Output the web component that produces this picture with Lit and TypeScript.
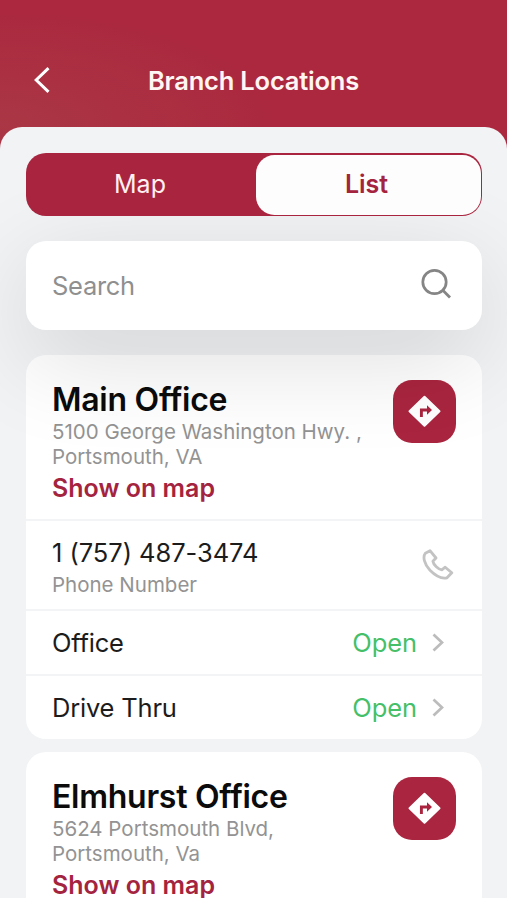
import { LitElement, html, css, svg } from "lit";
import { customElement, property } from "lit/decorators.js";

interface Branch {
  name: string;
  street: string;
  city: string;
  phone: string;
}

const branches: Branch[] = [
  { name: "Main Office", street: "5100 George Washington Hwy. ,", city: "Portsmouth, VA", phone: "1 (757) 487-3474" },
  { name: "Elmhurst Office", street: "5624 Portsmouth Blvd,", city: "Portsmouth, Va", phone: "" },
];

const chevron = svg`<path d="M1.5 1.5 10 9.5 1.5 17.5" fill="none" stroke="#bcbcbc" stroke-width="2.7"/>`;

@customElement("branch-card")
class BranchCard extends LitElement {
  @property({ attribute: false }) branch!: Branch;

  static styles = css`
    :host { display: block; background: #fff; border-radius: 20px; }
    .top { display: flex; justify-content: space-between; height: 164px; padding: 25px 26px 0 26px; box-sizing: border-box; }
    .name { font-size: 32px; font-weight: 600; line-height: 38px; color: #0b0b0b; letter-spacing: -0.27px; white-space: nowrap; }
    .address { font-size: 20.5px; line-height: 25px; color: #939393; white-space: nowrap; }
    .link { font-size: 25px; font-weight: 600; line-height: 30px; margin-top: 4px; color: #a4243f; }
    .text { margin-top: 1px; }
    .go { width: 63px; height: 63px; border-radius: 19px; background: #aa253f; display: grid; place-items: center; flex: none; }
    .row { display: flex; align-items: center; box-sizing: border-box; border-top: 2px solid #f3f4f5; padding: 0 28px 0 26px; height: 65px; font-size: 25.5px; letter-spacing: -0.2px; color: #1c1c1c; }
    .row > :first-child { flex: 1; }
    .phone { height: 90px; letter-spacing: -0.05px; }
    .phone > :first-child { padding-top: 7px; }
    .number { line-height: 32px; }
    .caption { font-size: 20.5px; line-height: 31px; color: #939393; letter-spacing: 0; }
    .open { color: #45c069; margin-right: 15px; letter-spacing: -0.1px; }
    .chevron { margin-right: 10px; }
    svg { display: block; }
  `;

  render() {
    const b = this.branch;
    return html`
      <div class="top">
        <div class="text">
          <div class="name">${b.name}</div>
          <div class="address">${b.street}<br />${b.city}</div>
          <div class="link">Show on map</div>
        </div>
        <div class="go">
          <svg width="34" height="34" viewBox="0 0 34 34">
            <path d="M16.5 1.8 31.5 16.3 16.5 30.8 1.5 16.3Z" fill="#fff" stroke="#fff" stroke-width="2" stroke-linejoin="round"/>
            <path d="M13.4 22V15H20" fill="none" stroke="#aa253f" stroke-width="2.9"/>
            <path d="M19 10.2 24 15 19 19.8Z" fill="#aa253f"/>
          </svg>
        </div>
      </div>
      ${b.phone
        ? html`
            <div class="row phone">
              <div>
                <div class="number">${b.phone}</div>
                <div class="caption">Phone Number</div>
              </div>
              <svg width="32" height="32" viewBox="0 0 32 32">
                <path d="M8 1.7 3.4 4.2C0.6 7.8 2 14.8 8 21.3C14 27.4 20.5 29.8 25 28.8L29.8 23.8 23.2 18.2 19.8 20.8C16.5 20.6 11.4 15.8 10.9 12.2L14 9Z" fill="none" stroke="#c3c3c3" stroke-width="2.8" stroke-linejoin="round"/>
              </svg>
            </div>
            ${["Office", "Drive Thru"].map(
              (label) => html`
                <div class="row">
                  <div>${label}</div>
                  <div class="open">Open</div>
                  <svg class="chevron" width="12" height="19" viewBox="0 0 12 19">${chevron}</svg>
                </div>
              `
            )}
          `
        : ""}
    `;
  }
}

@customElement("app-root")
class AppRoot extends LitElement {
  static styles = css`
    :host {
      display: flex; flex-direction: column; height: 898px; overflow: hidden;
      font-family: Inter, "Liberation Sans", sans-serif;
      background: radial-gradient(ellipse 280px 115px at 0 125px, #aa3745, #ab283e) #ab283e;
    }
    header { display: grid; grid-template-columns: 60px 1fr 60px; align-items: center; height: 127px; padding: 33px 0 0 0; box-sizing: border-box; flex: none; }
    .back { margin-left: 33px; display: block; }
    h1 { margin: 0; font-size: 25.5px; font-weight: 600; letter-spacing: -0.2px; color: #fff6f4; text-align: center; }
    main { flex: 1; min-height: 0; background: #f1f3f5; border-radius: 22px 22px 0 0; padding: 26px 25px 0 26px; overflow: hidden; display: flex; flex-direction: column; }
    .tabs { display: flex; height: 63px; flex: none; box-sizing: border-box; padding: 1.5px; background: #a9253f; border-radius: 20px; font-size: 25px; position: relative; z-index: 1; }
    .tab { flex: 1; display: grid; place-items: center; color: #fff0f2; border-radius: 18.5px; padding: 0 3px 1px 0; }
    .selected { background: #fdfdfd; color: #a4243f; font-weight: 600; flex: none; width: 222px; }
    .search { position: relative; display: flex; align-items: center; justify-content: space-between; flex: none; height: 89px; box-sizing: border-box; margin: 25px 0; padding: 0 30px 0 26px; background: #fff; border-radius: 20px; font-size: 25.5px; letter-spacing: -0.3px; color: #8f8f8f; box-shadow: 0 27px 100px rgba(0, 0, 0, 0.14); }
    .search svg { margin-bottom: 4px; }
    .list { display: flex; flex-direction: column; gap: 13px; }
    branch-card { flex: none; }
  `;

  render() {
    return html`
      <header>
        <svg class="back" width="18" height="28" viewBox="0 0 18 28">
          <path d="M15.5 2.2 3.2 14 15.5 25.8" fill="none" stroke="#fff" stroke-width="3"/>
        </svg>
        <h1>Branch Locations</h1>
      </header>
      <main>
        <div class="tabs">
          <div class="tab">Map</div>
          <div class="tab selected">List</div>
        </div>
        <div class="search">
          <span>Search</span>
          <svg width="32" height="32" viewBox="0 0 32 32">
            <circle cx="14.5" cy="14" r="11.7" fill="none" stroke="#858585" stroke-width="2.7"/>
            <path d="M22.8 22.3 30 29.5" stroke="#858585" stroke-width="2.8"/>
          </svg>
        </div>
        <div class="list">
          ${branches.map((b) => html`<branch-card .branch=${b}></branch-card>`)}
        </div>
      </main>
    `;
  }
}
